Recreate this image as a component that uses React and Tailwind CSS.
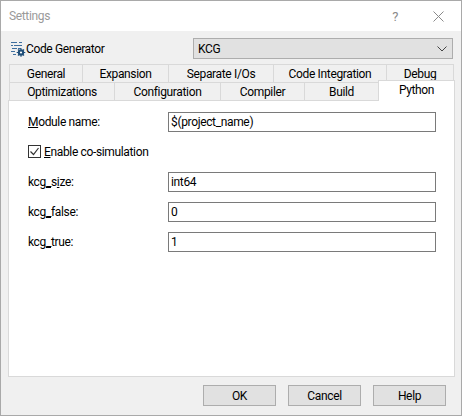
import React from "react";

const TopTab = ({ children, className }) => (
  <div className={"h-[18px] flex items-center justify-center border-t border-r border-[#d9d9d9] bg-[#f0f0f0] " + className}>
    {children}
  </div>
);

const Field = ({ label, value, className }) => (
  <div className={"flex items-center " + className}>
    <div className="w-[140px] shrink-0">{label}</div>
    <div className="w-[268px] h-[20px] border border-[#7a7a7a] bg-white pl-[2px] flex items-center">{value}</div>
  </div>
);

const Btn = ({ children }) => (
  <div className="w-[73px] h-[21px] border border-[#adadad] bg-[#e1e1e1] flex items-center justify-center">{children}</div>
);

function GenIcon() {
  return (
    <svg width="16" height="16" viewBox="0 0 16 16" className="shrink-0">
      <path d="M1 1.5h6M9 1.5h3M1 4.5h2M4 4.5h8M2 7.5h5M8 7.5h3M1 10.5h4M3 13.5h3" stroke="#3f6f9f" strokeWidth="1" fill="none" />
      <circle cx="11" cy="11.5" r="3.2" fill="#1f4e79" />
      <circle cx="11" cy="11.5" r="1.1" fill="#ffffff" />
      <path d="M11 7.2v1.6M11 14.2v1.6M6.7 11.5h1.6M13.7 11.5h1.6M8 8.5l1 1M13 13.5l1 1M14 8.5l-1 1M9 13.5l-1 1" stroke="#1f4e79" strokeWidth="1.2" />
    </svg>
  );
}

export default function App() {
  return (
    <div className="w-[462px] h-[416px] border border-[#a9a9a9] bg-[#f0f0f0] text-[12px] tracking-[-0.35px] leading-none text-black flex flex-col overflow-hidden" style={{ fontFamily: 'Roboto, "Liberation Sans", sans-serif' }}>
      {/* title bar */}
      <div className="h-[30px] bg-white flex items-center shrink-0">
        <div className="pl-[8px] text-[#9a9a9a] text-[12px] flex-1">Settings</div>
        <div className="text-[#8a8a8a] text-[13px] mr-[35px]">?</div>
        <svg width="11" height="11" viewBox="0 0 11 11" className="mr-[17px]">
          <path d="M0.5 0.5l10 10M10.5 0.5l-10 10" stroke="#8a8a8a" strokeWidth="1" />
        </svg>
      </div>

      {/* generator row */}
      <div className="flex items-center h-[21px] mt-[7px] pl-[9px] shrink-0">
        <GenIcon />
        <div className="w-[167px]">Code Generator</div>
        <div className="w-[260px] h-[21px] border border-[#adadad] bg-[#e1e1e1] flex items-center justify-between pl-[4px] pr-[5px]">
          <span>KCG</span>
          <svg width="10" height="6" viewBox="0 0 10 6">
            <path d="M0.5 0.5l4.5 4.5 4.5-4.5" stroke="#444" fill="none" />
          </svg>
        </div>
      </div>

      {/* tabs */}
      <div className="mt-[5px] ml-[8px] w-[446px] shrink-0 relative">
        <div className="flex border-l border-[#d9d9d9] w-[445px]">
          <TopTab className="w-[73px]">General</TopTab>
          <TopTab className="w-[86px]">Expansion</TopTab>
          <TopTab className="w-[105px]">Separate I/Os</TopTab>
          <TopTab className="w-[113px]">Code Integration</TopTab>
          <TopTab className="w-[67px]">Debug</TopTab>
        </div>
        <div className="flex border-l border-[#d9d9d9]">
          <TopTab className="w-[105px]">Optimizations</TopTab>
          <TopTab className="w-[106px]">Configuration</TopTab>
          <TopTab className="w-[84px]">Compiler</TopTab>
          <TopTab className="w-[74px]">Build</TopTab>
          <div className="w-[76px] h-[18px]" />
        </div>
        <div className="absolute left-[369px] top-[16px] w-[77px] h-[21px] bg-white border border-b-0 border-[#d9d9d9] flex items-start justify-center pt-[3px] z-10">Python</div>
      </div>

      {/* panel */}
      <div className="ml-[7px] w-[447px] h-[277px] border border-[#d9d9d9] bg-white shrink-0 pl-[19px] pt-[11px]">
        <Field label={<><u>M</u>odule name:</>} value="$(project_name)" />
        <div className="flex items-center mt-[13px] h-[13px]">
          <div className="w-[13px] h-[13px] border border-[#333] flex items-center justify-center">
            <svg width="11" height="11" viewBox="0 0 11 11">
              <path d="M1.5 5.5l3 3 5-6.5" stroke="#333" strokeWidth="1.2" fill="none" />
            </svg>
          </div>
          <div className="ml-[3px]"><u>E</u>nable co-simulation</div>
        </div>
        <Field className="mt-[14px]" label={<>kcg<u>_</u>s<u>i</u>ze:</>} value="int64" />
        <Field className="mt-[10px]" label={<>kcg<u>_</u>false:</>} value="0" />
        <Field className="mt-[10px]" label={<>kcg<u>_</u>true:</>} value="1" />
      </div>

      {/* footer buttons */}
      <div className="flex justify-end gap-[12px] pr-[15px] mt-[8px] shrink-0">
        <Btn>OK</Btn>
        <Btn>Cancel</Btn>
        <Btn>Help</Btn>
      </div>
    </div>
  );
}
